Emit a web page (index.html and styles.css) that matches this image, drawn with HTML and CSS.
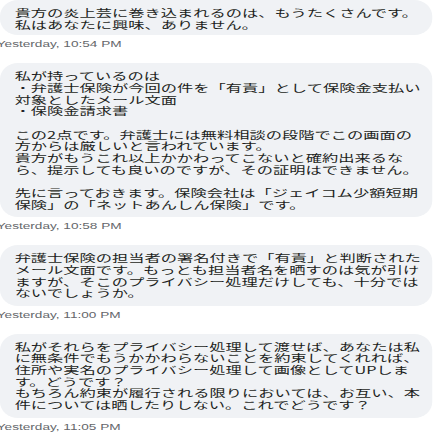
FILE: index.html
```html
<!DOCTYPE html>
<html lang="ja">
<head>
    <meta charset="UTF-8">
    <meta name="viewport" content="width=device-width, initial-scale=1.0">
    <title>Messages</title>
    <link rel="stylesheet" href="styles.css">
</head>
<body>

    <div class="chat">

        <!-- Message 1 -->
        <div class="msg">
            <div class="bubble first">貴方の炎上芸に巻き込まれるのは、もうたくさんです。<br>私はあなたに興味、ありません。</div>
            <div class="time">Yesterday, 10:54 PM</div>
        </div>

        <!-- Message 2 -->
        <div class="msg">
            <div class="bubble">私が持っているのは<br>・弁護士保険が今回の件を「有責」として保険金支払い<br>対象としたメール文面<br>・保険金請求書<br><br>この2点です。弁護士には無料相談の段階でこの画面の<br>方からは厳しいと言われています。<br>貴方がもうこれ以上かかわってこないと確約出来るな<br>ら、提示しても良いのですが、その証明はできません。<br><br>先に言っておきます。保険会社は「ジェイコム少額短期<br>保険」の「ネットあんしん保険」です。</div>
            <div class="time">Yesterday, 10:58 PM</div>
        </div>

        <!-- Message 3 -->
        <div class="msg">
            <div class="bubble">弁護士保険の担当者の署名付きで「有責」と判断された<br>メール文面です。もっとも担当者名を晒すのは気が引け<br>ますが、そこのプライバシー処理だけしても、十分では<br>ないでしょうか。</div>
            <div class="time">Yesterday, 11:00 PM</div>
        </div>

        <!-- Message 4 -->
        <div class="msg">
            <div class="bubble">私がそれらをプライバシー処理して渡せば、あなたは私<br>に無条件でもうかかわらないことを約束してくれれば、<br>住所や実名のプライバシー処理して画像としてUPしま<br>す。どうです？<br>もちろん約束が履行される限りにおいては、お互い、本<br>件については晒したりしない。これでどうです？</div>
            <div class="time">Yesterday, 11:05 PM</div>
        </div>

    </div>

</body>
</html>
```

FILE: styles.css
```css
body {
    margin: 0;
    padding: 0;
    background-color: #ffffff;
    overflow: hidden;
}

/* the screenshot is stretched sideways, so the whole column is too */
.chat {
    width: 268px;
    transform: scaleX(1.625);
    transform-origin: 0 0;
}

.msg {
    margin-bottom: 14px;
}

.bubble {
    margin-right: 2px;
    padding: 7px 6px 7px 9px;
    background-color: #f0f2f5;
    border-radius: 11px / 16px;
    font-family: "Noto Sans CJK JP", sans-serif;
    font-size: 10px;
    line-height: 11.65px;
    color: #1c1e21;
    white-space: nowrap;
}

.bubble.first {
    padding-bottom: 5px;
}

.time {
    margin-top: 4px;
    margin-left: -2px;
    font-family: "Liberation Sans", Arial, sans-serif;
    font-size: 8.4px;
    line-height: 10px;
    color: #65676b;
}
```
